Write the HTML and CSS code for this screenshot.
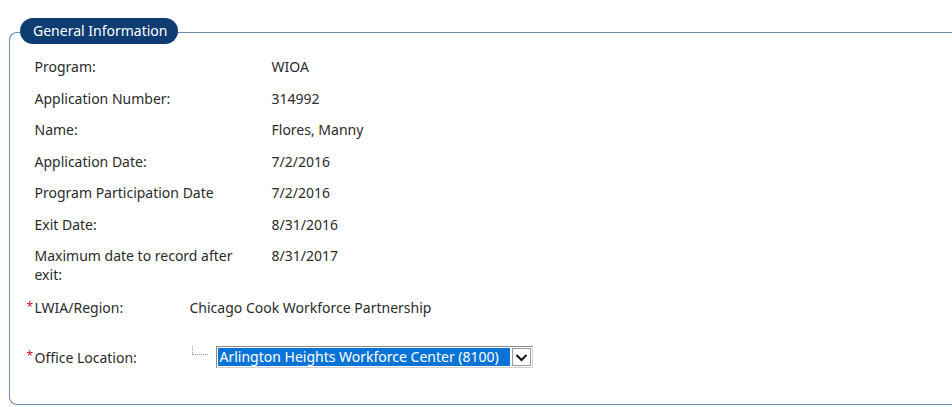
FILE: index.html
```html
<!DOCTYPE html>
<html>
<head>
<meta charset="utf-8">
<link rel="stylesheet" href="styles.css">
</head>
<body>
<section class="panel">
  <div class="badge">General Information</div>
  <div class="info">
    <div class="label">Program:</div><div class="value">WIOA</div>
    <div class="label">Application Number:</div><div class="value">314992</div>
    <div class="label">Name:</div><div class="value">Flores, Manny</div>
    <div class="label">Application Date:</div><div class="value">7/2/2016</div>
    <div class="label">Program Participation Date</div><div class="value">7/2/2016</div>
    <div class="label">Exit Date:</div><div class="value">8/31/2016</div>
    <div class="label">Maximum date to record after exit:</div><div class="value">8/31/2017</div>
  </div>
  <div class="req-row region">
    <span class="star">*</span><span class="req-label">LWIA/Region:</span>
    <span class="req-value">Chicago Cook Workforce Partnership</span>
  </div>
  <div class="req-row office">
    <span class="star">*</span><span class="req-label">Office Location:</span>
    <span class="connector"></span>
    <div class="select">
      <div class="select-value">Arlington Heights Workforce Center (8100)</div>
      <div class="select-arrow">
        <svg width="13" height="9" viewBox="0 0 13 9"><path d="M1.5 2 L6.5 7 L11.5 2" fill="none" stroke="#111" stroke-width="2"/></svg>
      </div>
    </div>
  </div>
</section>
</body>
</html>
```
FILE: styles.css
```css
html, body {
  margin: 0;
  padding: 0;
  background: #fff;
  overflow: hidden;
}
body {
  font-family: "Noto Sans", "Open Sans", sans-serif;
  font-size: 14px;
  color: #2b2b2b;
}
.panel {
  position: relative;
  margin: 32px 0 0 9px;
  height: 373px;
  box-sizing: border-box;
  border: 1.5px solid #6a8bae;
  border-right: none;
  border-radius: 8px 0 0 8px;
  padding: 24px 0 0 0;
}
.badge {
  position: absolute;
  left: 10px;
  top: -15px;
  height: 26px;
  width: 158px;
  box-sizing: border-box;
  background: #0d3c73;
  color: #fff;
  border-radius: 13px;
  padding-left: 13px;
  line-height: 26px;
  font-size: 14px;
}
.info {
  display: grid;
  grid-template-columns: 237px auto;
  row-gap: 12.5px;
  padding-left: 24.5px;
  line-height: 19px;
}
.label {
  width: 205px;
}
.req-row {
  display: flex;
  align-items: center;
  line-height: 19px;
}
.region {
  margin-top: 14px;
}
.office {
  margin-top: 29px;
}
.star {
  color: #c8102e;
  width: 8px;
  margin-left: 16.5px;
  font-size: 12px;
  line-height: 12px;
  position: relative;
  top: -1px;
}
.req-label {
  width: 155px;
}
.connector {
  width: 15px;
  height: 8px;
  margin-left: 2px;
  margin-right: 8px;
  border-left: 1px dotted #9a9a9a;
  border-bottom: 1px dotted #9a9a9a;
  align-self: flex-start;
}
.select {
  display: flex;
  width: 317px;
  height: 22px;
  box-sizing: border-box;
  border: 1px solid #8a8a8a;
  border-right-color: #d0d0d0;
  border-bottom-color: #d0d0d0;
  padding: 1px;
  background: #fff;
}
.select-value {
  flex: 1;
  background: #0a74d6;
  color: #fff;
  font-size: 14px;
  line-height: 18px;
  padding-left: 2px;
  white-space: nowrap;
}
.select-arrow {
  width: 19px;
  margin-left: 2px;
  box-sizing: border-box;
  border: 1px solid #9a9a9a;
  display: flex;
  align-items: center;
  justify-content: center;
  background: #fff;
}
```
